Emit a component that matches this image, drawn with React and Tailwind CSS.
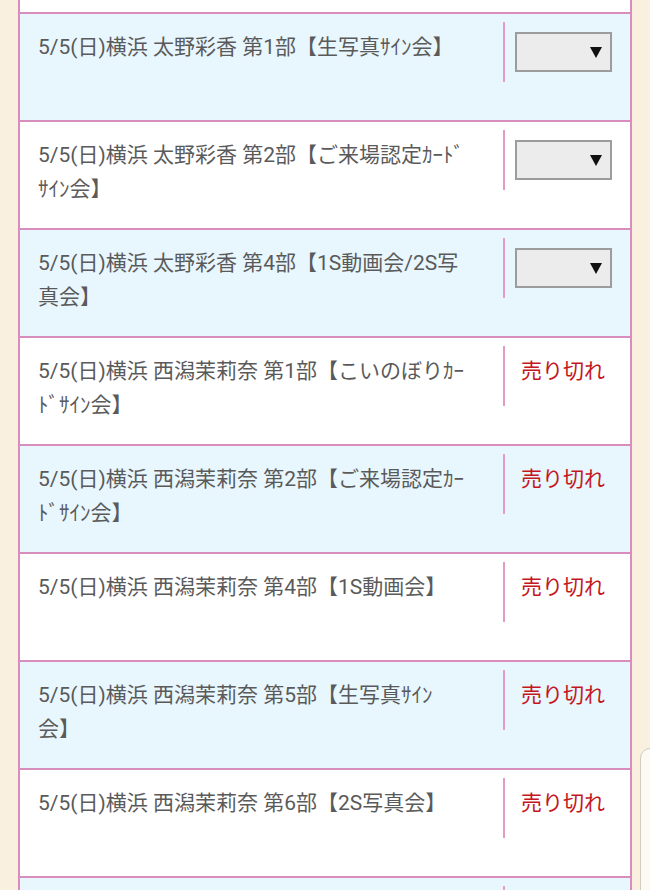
import React from "react";

const rows = [
  { title: "5/5(日)横浜 太野彩香 第1部【生写真ｻｲﾝ会】", open: true },
  { title: "5/5(日)横浜 太野彩香 第2部【ご来場認定ｶｰﾄﾞｻｲﾝ会】", open: true },
  { title: "5/5(日)横浜 太野彩香 第4部【1S動画会/2S写真会】", open: true },
  { title: "5/5(日)横浜 西潟茉莉奈 第1部【こいのぼりｶｰﾄﾞｻｲﾝ会】", open: false },
  { title: "5/5(日)横浜 西潟茉莉奈 第2部【ご来場認定ｶｰﾄﾞｻｲﾝ会】", open: false },
  { title: "5/5(日)横浜 西潟茉莉奈 第4部【1S動画会】", open: false },
  { title: "5/5(日)横浜 西潟茉莉奈 第5部【生写真ｻｲﾝ会】", open: false },
  { title: "5/5(日)横浜 西潟茉莉奈 第6部【2S写真会】", open: false },
];

function QtySelect() {
  return (
    <div className="mt-[10px] ml-[10px] w-[97px] h-[40px] bg-[#ececec] border-2 border-[#9c9c9c] flex items-center justify-end pr-[8px]">
      <svg width="12" height="11" viewBox="0 0 12 11">
        <path d="M0 0 H12 L6 11 Z" fill="#111" />
      </svg>
    </div>
  );
}

function Row({ title, open, blue }) {
  return (
    <div className={`flex h-[108px] border-b-2 border-[#d98cbe] ${blue ? "bg-[#e8f6fd]" : "bg-white"}`}>
      <p className="flex-1 pl-[18px] pr-[39px] pt-4 text-[21px] leading-[34px] text-[#5a5a5a] [text-spacing-trim:space-all]">
        {title}
      </p>
      <div className="w-[127px] shrink-0 mt-2 h-[60px] border-l-2 border-[#e69bcb]">
        {open === true && <QtySelect />}
        {open === false && (
          <div className="pl-[16px] pt-2 text-[21px] leading-[34px] text-[#c4161c]">売り切れ</div>
        )}
      </div>
    </div>
  );
}

export default function App() {
  return (
    <div
      className="relative h-[890px] overflow-hidden bg-[#f9f0e0]"
      style={{ fontFamily: 'Roboto, "Noto Sans CJK JP", sans-serif' }}
    >
      <div className="mx-[18px] border-x-2 border-[#d98cbe]">
        {/* tail of the row above */}
        <div className="h-[14px] bg-white border-b-2 border-[#d98cbe]" />
        {rows.map((r, i) => (
          <Row key={i} {...r} blue={i % 2 === 0} />
        ))}
        {/* next row, only its top edge is on screen */}
        <Row title="" open={null} blue />
      </div>

      {/* floating panel peeking in from the right */}
      <div className="absolute left-[640px] top-[748px] w-[40px] h-[200px] rounded-tl-[10px] border border-[#cfcac2] bg-[#fdfaf4]" />
    </div>
  );
}
